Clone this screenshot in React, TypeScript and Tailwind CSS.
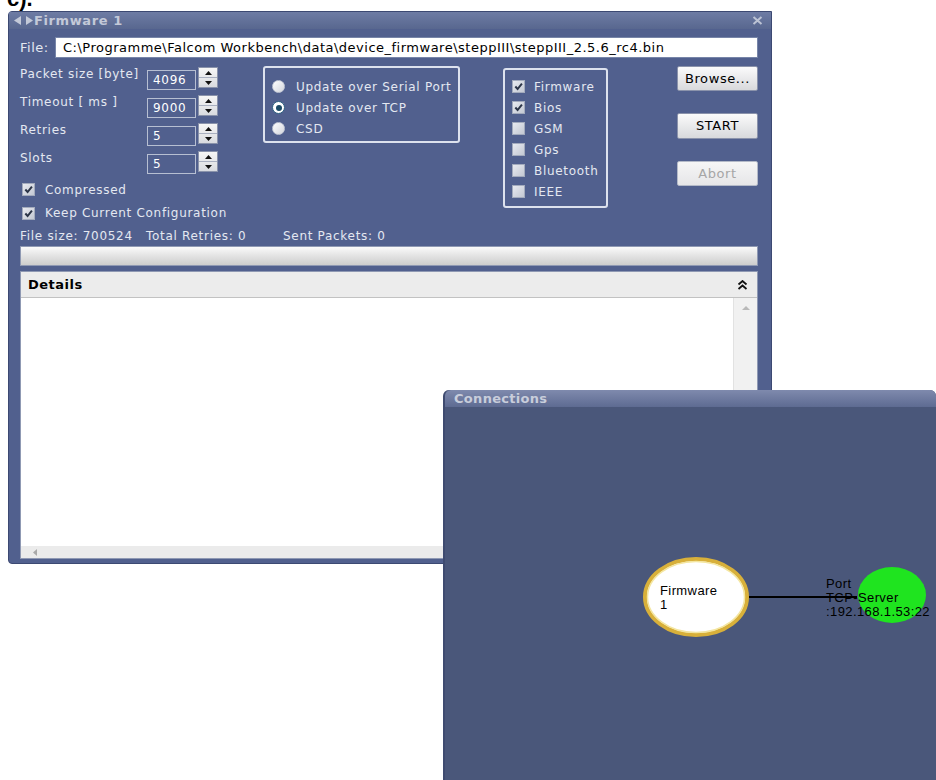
import React from 'react';

const ui = "font-['DejaVu_Sans',Verdana,sans-serif]";

function Spinner() {
  return (
    <div className="flex h-[21px] w-[20px] flex-col border border-[#8a93ab] bg-linear-to-b from-[#f6f6f6] to-[#d9dbe0]">
      <div className="flex flex-1 items-center justify-center border-b border-[#a8afc0]">
        <svg width="7" height="4" viewBox="0 0 7 4"><path d="M0 4 L3.5 0 L7 4 Z" fill="#111" /></svg>
      </div>
      <div className="flex flex-1 items-center justify-center">
        <svg width="7" height="4" viewBox="0 0 7 4"><path d="M0 0 L3.5 4 L7 0 Z" fill="#111" /></svg>
      </div>
    </div>
  );
}

function SpinRow({ label, value }: { label: string; value: string }) {
  return (
    <div className="flex h-[28px] items-start">
      <div className="w-[127px] whitespace-nowrap pt-[1px] leading-[14px]">{label}</div>
      <div className="mt-[4px] flex h-[20px] w-[49px] items-center border border-[#b7bfd2] pl-[5px] text-white">
        {value}
      </div>
      <div className="ml-[2px] mt-[1px]">
        <Spinner />
      </div>
    </div>
  );
}

function Check({ on }: { on?: boolean }) {
  return (
    <span className="flex h-[13px] w-[13px] shrink-0 items-center justify-center border border-[#a3abbd] bg-linear-to-br from-[#e8eaf0] to-[#c3c8d3]">
      {on && (
        <svg width="9" height="9" viewBox="0 0 10 10">
          <path d="M1.5 5 L4 7.8 L8.8 1.8" fill="none" stroke="#2b3447" strokeWidth="2.2" />
        </svg>
      )}
    </span>
  );
}

function Radio({ on }: { on?: boolean }) {
  return on ? (
    <span className="flex h-[13px] w-[13px] items-center justify-center rounded-full border border-[#2d5f80] bg-white">
      <span className="h-[6px] w-[6px] rounded-full bg-[#1b4a66]" />
    </span>
  ) : (
    <span className="h-[13px] w-[13px] rounded-full border border-[#c4c9d6] bg-linear-to-br from-white to-[#d3d6de]" />
  );
}

function FirmwareWindow() {
  return (
    <div className={`absolute left-[8px] top-[11px] flex h-[553px] w-[764px] flex-col rounded-tl-[4px] rounded-bl-[4px] border border-[#3c4972] bg-[#51608e] text-[12px] tracking-[0.7px] text-[#e4e8f1] ${ui}`}>
      {/* title bar */}
      <div className="flex h-[17px] shrink-0 items-center bg-linear-to-b from-[#6e7ca4] to-[#58678f] pl-[5px] pr-[8px]">
        <svg width="19" height="9" viewBox="0 0 19 9">
          <path d="M0 4.5 L7 0 L7 9 Z" fill="#c3c9d8" />
          <path d="M19 4.5 L12 0 L12 9 Z" fill="#c3c9d8" />
        </svg>
        <span className="ml-[1px] text-[13px] font-bold tracking-[0.6px] text-[#c3c9d8]">Firmware 1</span>
        <svg className="ml-auto" width="11" height="9" viewBox="0 0 11 9">
          <path d="M1.5 1 L9.5 8 M9.5 1 L1.5 8" stroke="#bcc3d4" strokeWidth="2" />
        </svg>
      </div>

      <div className="flex flex-1 flex-col pb-[4px] pl-[11px] pr-[13px]">
        {/* file path */}
        <div className="mt-[8px] flex h-[21px] items-center text-[13px] tracking-[0.5px]">
          <span className="w-[35px]">File:</span>
          <div className="flex h-[21px] flex-1 items-center whitespace-nowrap border border-[#7785a8] bg-white pl-[7px] text-black">
            C:\Programme\Falcom Workbench\data\device_firmware\steppIII\steppIII_2.5.6_rc4.bin
          </div>
        </div>

        <div className="mt-[8px] flex">
          {/* parameters */}
          <div className="w-[243px]">
            <SpinRow label="Packet size [byte]" value="4096" />
            <SpinRow label="Timeout [ ms ]" value="9000" />
            <SpinRow label="Retries" value="5" />
            <SpinRow label="Slots" value="5" />
            <div className="flex h-[23px] items-center pl-[2px]">
              <Check on />
              <span className="ml-[10px]">Compressed</span>
            </div>
            <div className="flex h-[24px] items-center whitespace-nowrap pl-[2px]">
              <Check on />
              <span className="ml-[10px]">Keep Current Configuration</span>
            </div>
          </div>

          {/* transport */}
          <div className="h-[77px] w-[197px] rounded-[3px] border-2 border-[#dde2ee] pl-[7px] pt-[8px]">
            {[
              ['Update over Serial Port', false],
              ['Update over TCP', true],
              ['CSD', false],
            ].map(([t, on]) => (
              <div key={t as string} className="flex h-[21px] items-center whitespace-nowrap">
                <Radio on={on as boolean} />
                <span className="ml-[11px]">{t}</span>
              </div>
            ))}
          </div>

          {/* components */}
          <div className="ml-[43px] mt-[2px] h-[140px] w-[105px] rounded-[3px] border-2 border-[#dde2ee] pl-[7px] pt-[6px]">
            {[
              ['Firmware', true],
              ['Bios', true],
              ['GSM', false],
              ['Gps', false],
              ['Bluetooth', false],
              ['IEEE', false],
            ].map(([t, on]) => (
              <div key={t as string} className="flex h-[21px] items-center whitespace-nowrap">
                <Check on={on as boolean} />
                <span className="ml-[9px]">{t}</span>
              </div>
            ))}
          </div>

          {/* actions */}
          <div className="ml-auto flex w-[81px] flex-col text-[13px] tracking-[0.6px]">
            <button className="h-[25px] rounded-[2px] border border-[#8b93ab] bg-linear-to-b from-[#fbfbfb] to-[#d8d9dc] text-black">
              Browse...
            </button>
            <button className="mt-[22px] h-[26px] rounded-[2px] border border-[#8b93ab] bg-linear-to-b from-[#fbfbfb] to-[#d8d9dc] text-black">
              START
            </button>
            <button className="mt-[22px] h-[25px] rounded-[2px] border border-[#b4bac8] bg-linear-to-b from-[#f6f6f6] to-[#e6e6e8] text-[#a6a6a6]">
              Abort
            </button>
          </div>
        </div>

        {/* counters */}
        <div className="flex h-[21px] items-center whitespace-nowrap">
          <span className="w-[126px]">File size: 700524</span>
          <span className="w-[137px]">Total Retries: 0</span>
          <span>Sent Packets: 0</span>
        </div>

        {/* progress */}
        <div className="h-[20px] border border-[#8f99b3] bg-linear-to-b from-[#fafafa] via-[#e3e3e3] to-[#cdcdcd]" />

        {/* details */}
        <div className="mt-[5px] flex flex-1 flex-col border border-[#8f99b3] bg-white">
          <div className="flex h-[26px] shrink-0 items-center border-b border-[#c2c2c2] bg-[#ececec] pl-[7px] pr-[9px] text-[13px] font-bold tracking-[0.5px] text-black">
            Details
            <svg className="ml-auto" width="11" height="10" viewBox="0 0 11 10">
              <path d="M1.5 4.5 L5.5 1 L9.5 4.5 M1.5 9 L5.5 5.5 L9.5 9" fill="none" stroke="#111" strokeWidth="1.8" />
            </svg>
          </div>
          <div className="flex flex-1">
            <div className="flex-1" />
            <div className="flex w-[24px] justify-center border-l border-[#e2e2e2] bg-[#f1f1f1] pt-[8px]">
              <svg width="8" height="4" viewBox="0 0 8 4"><path d="M0 4 L4 0 L8 4 Z" fill="#b9b9b9" /></svg>
            </div>
          </div>
          <div className="flex h-[12px] shrink-0 items-center bg-[#ebebeb] pl-[12px]">
            <svg width="4" height="7" viewBox="0 0 4 7"><path d="M4 0 L0 3.5 L4 7 Z" fill="#a9a9a9" /></svg>
          </div>
        </div>
      </div>
    </div>
  );
}

function ConnectionsWindow() {
  return (
    <div className="absolute left-[443px] top-[390px] flex h-[390px] w-[493px] flex-col rounded-t-[6px] border-l-2 border-[#3f4b70] bg-[#4a577a]">
      <div className="flex h-[17px] shrink-0 items-center rounded-t-[6px] bg-linear-to-b from-[#7f8aad] to-[#5e6b92] pl-[9px] font-['DejaVu_Sans',Verdana,sans-serif] text-[13px] font-bold tracking-[0.3px] text-[#c8cddb]">
        Connections
      </div>
      {/* link graph */}
      <div className="relative flex-1 font-['Liberation_Sans',Arial,sans-serif] text-[13px] leading-[14px] tracking-[0.4px] text-black">
        <svg className="absolute left-0 top-0" width="493" height="373">
          <line x1="302" y1="190" x2="412" y2="190" stroke="#000" strokeWidth="2" />
          <ellipse cx="251" cy="190" rx="51" ry="38" fill="#fff" stroke="#d8b03a" strokeWidth="4" />
          <ellipse cx="251" cy="190" rx="48.5" ry="35.5" fill="none" stroke="#f4e6a0" strokeWidth="1.5" />
          <ellipse cx="447" cy="188" rx="34" ry="28" fill="#1fe41f" />
        </svg>
        <div className="absolute left-[215px] top-[177px]">
          Firmware
          <br />1
        </div>
        <div className="absolute left-[381px] top-[170px] whitespace-nowrap">
          Port
          <br />
          TCP-Server
          <br />
          :192.168.1.53:22
        </div>
      </div>
    </div>
  );
}

export default function App() {
  return (
    <div className="relative h-[780px] w-[936px] overflow-hidden bg-white">
      <div className="absolute left-[7px] top-[-12px] font-['Liberation_Sans',Arial,sans-serif] text-[22px] font-bold leading-none text-black">
        c).
      </div>
      <FirmwareWindow />
      <ConnectionsWindow />
    </div>
  );
}
